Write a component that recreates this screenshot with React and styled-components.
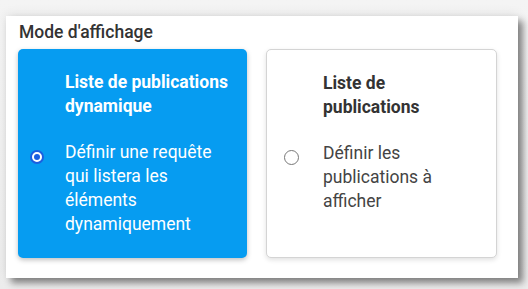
import React from "react";
import styled, { createGlobalStyle } from "styled-components";

const Global = createGlobalStyle`
  html, body { margin: 0; padding: 0; }
  body {
    background: linear-gradient(180deg, #f4f4f4 0%, #ececec 100%);
    font-family: Roboto, "Noto Sans", Arial, sans-serif;
    width: 528px;
    height: 289px;
    overflow: hidden;
  }
`;

const Panel = styled.section`
  box-sizing: border-box;
  margin: 16px 0 0 6px;
  width: 512px;
  height: 262px;
  background: #ffffff;
  padding: 6px 12px 0 12px;
  box-shadow: 5px 5px 7px rgba(0, 0, 0, 0.45), 0 -2px 10px rgba(0, 0, 0, 0.08);
`;

const Heading = styled.h2`
  margin: 0 0 7px 1px;
  font-size: 17.5px;
  line-height: 20px;
  font-weight: 500;
  color: #333333;
`;

const Cards = styled.div`
  display: grid;
  grid-template-columns: 229px 231px;
  column-gap: 19px;
  height: 209px;
`;

const Card = styled.div`
  box-sizing: border-box;
  display: grid;
  grid-template-columns: auto 1fr;
  column-gap: ${(p) => (p.$selected ? "21px" : "24px")};
  padding: 21px ${(p) => (p.$selected ? "16px" : "25px")} 20px
    ${(p) => (p.$selected ? "12px" : "17px")};
  border-radius: 5px;
  background: ${(p) => (p.$selected ? "#069cf1" : "#ffffff")};
  border: ${(p) => (p.$selected ? "none" : "1px solid #d4d4d4")};
  box-shadow: ${(p) =>
    p.$selected
      ? "0 2px 5px rgba(0,0,0,0.25)"
      : "0 2px 5px rgba(0,0,0,0.12)"};
  color: ${(p) => (p.$selected ? "#ffffff" : "#333333")};
`;

const Radio = styled.span`
  box-sizing: border-box;
  align-self: center;
  margin-top: 6px;
  width: ${(p) => (p.$checked ? "14px" : "15px")};
  height: ${(p) => (p.$checked ? "14px" : "15px")};
  border-radius: 50%;
  background: #ffffff;
  border: ${(p) => (p.$checked ? "2px solid #1b5fe0" : "1px solid #777777")};
  display: flex;
  align-items: center;
  justify-content: center;

  &::after {
    content: "";
    display: ${(p) => (p.$checked ? "block" : "none")};
    width: 6px;
    height: 6px;
    border-radius: 50%;
    background: #1b5fe0;
  }
`;

const Body = styled.div`
  display: flex;
  flex-direction: column;
  gap: 22px;
`;

const Title = styled.div`
  font-size: 17.5px;
  line-height: 24px;
  font-weight: 700;
`;

const Desc = styled.div`
  font-size: 17.5px;
  line-height: 24px;
  font-weight: 400;
  color: ${(p) => (p.$selected ? "#ffffff" : "#444444")};
`;

const options = [
  {
    title: "Liste de publications dynamique",
    desc: "Définir une requête qui listera les éléments dynamiquement",
    selected: true,
  },
  {
    title: "Liste de publications",
    desc: "Définir les publications à afficher",
    selected: false,
  },
];

export default function App() {
  return (
    <>
      <Global />
      <Panel>
        <Heading>Mode d'affichage</Heading>
        <Cards>
          {options.map((o) => (
            <Card key={o.title} $selected={o.selected}>
              <Radio $checked={o.selected} />
              <Body>
                <Title>{o.title}</Title>
                <Desc $selected={o.selected}>{o.desc}</Desc>
              </Body>
            </Card>
          ))}
        </Cards>
      </Panel>
    </>
  );
}
